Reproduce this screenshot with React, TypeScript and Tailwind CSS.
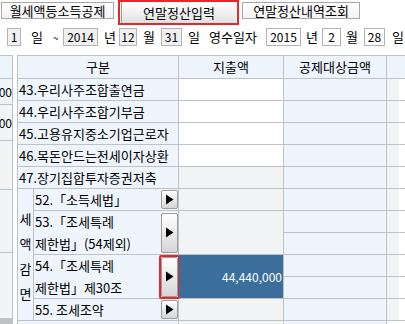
import React from "react"

const font = { fontFamily: '"Noto Sans CJK KR", "Noto Sans", sans-serif' }

function Tab({ label, active }: { label: string; active?: boolean }) {
  if (active) {
    return (
      <div className="ml-[4px] h-[25px] w-[121px] border-2 border-[#e5262a] p-px pt-0">
        <div className="flex h-[21px] items-center justify-center border-l border-[#9a9a9a] bg-gradient-to-b from-white to-[#e2e2e2] text-[13px] text-black">
          {label}
        </div>
      </div>
    )
  }
  return (
    <div className="mt-[2px] flex h-[17px] items-center justify-center border border-[#a8a8a8] bg-gradient-to-b from-white to-[#f3f3f3] text-[13px] text-black">
      {label}
    </div>
  )
}

function Box({ v, w, ml, gray }: { v: string; w: string; ml: string; gray?: boolean }) {
  return (
    <div
      className={`${ml} ${w} flex h-[18px] items-center justify-center border border-[#b4b4b4] text-[12px] ${gray ? "bg-[#f0f0f0]" : "bg-white"}`}
    >
      {v}
    </div>
  )
}

function Arrow({ tall, selected }: { tall?: boolean; selected?: boolean }) {
  const btn = (
    <div
      className={`flex w-[17px] items-center justify-center rounded-[2px] border border-[#9c9c9c] bg-gradient-to-b from-white to-[#d6d6d6] ${tall ? "h-[40px]" : "h-[19px]"}`}
    >
      <svg width="9" height="11" viewBox="0 0 9 11">
        <polygon points="1,0.5 8.5,5.5 1,10.5" fill="#000" />
      </svg>
    </div>
  )
  if (selected) {
    return <div className="-mr-[2px] rounded-[2px] border-2 border-[#e5262a] p-0">{btn}</div>
  }
  return btn
}

const cell = "flex items-center text-[13px] text-black"

export default function App() {
  return (
    <div className="h-[324px] w-[405px] overflow-hidden bg-white" style={font}>
      {/* tabs */}
      <div className="flex h-[26px] items-start">
        <div className="ml-[1px] w-[113px]">
          <Tab label="월세액등소득공제" />
        </div>
        <Tab label="연말정산입력" active />
        <div className="ml-[3px] w-[118px]">
          <Tab label="연말정산내역조회" />
        </div>
      </div>

      {/* date row */}
      <div className="mt-[2px] flex h-[18px] items-center text-[13px] text-black">
        <Box v="1" w="w-[14px]" ml="ml-[7px]" gray />
        <span className="ml-[10px] w-[13px]">일</span>
        <span className="ml-[9px] w-[8px] text-[10px]">~</span>
        <Box v="2014" w="w-[35px]" ml="ml-[2px]" gray />
        <span className="ml-[6px] w-[13px]">년</span>
        <Box v="12" w="w-[18px]" ml="ml-[2px]" gray />
        <span className="ml-[6px] w-[13px]">월</span>
        <Box v="31" w="w-[21px]" ml="ml-[5px]" gray />
        <span className="ml-[6px] w-[13px]">일</span>
        <span className="ml-[8px] w-[52px]">영수일자</span>
        <Box v="2015" w="w-[35px]" ml="ml-[5px]" />
        <span className="ml-[5px] w-[13px]">년</span>
        <Box v="2" w="w-[19px]" ml="ml-[3px]" />
        <span className="ml-[5px] w-[13px]">월</span>
        <Box v="28" w="w-[21px]" ml="ml-[5px]" />
        <span className="ml-[7px] w-[13px]">일</span>
      </div>

      {/* table area */}
      <div className="mt-[9px] flex">
        {/* cut-off column on the left */}
        <div className="flex w-[13px] flex-col gap-px border-t border-r border-[#c0c1c5] bg-[#c0c1c5]">
          <div className="h-[22px] bg-[#eef4fb]" />
          <div className="flex h-[25px] items-center justify-end bg-[#f3f4f6] text-[12px]">00</div>
          <div className="flex h-[35px] items-center justify-end bg-[#f3f4f6] text-[12px]">00</div>
          <div className="h-[48px] bg-[#f3f4f6]" />
          <div className="h-[62px] bg-[#f3f4f6]" />
          <div className="h-[65px] bg-[#f3f4f6]" />
        </div>
        <div className="w-[4px]" />

        <div className="grid h-[269px] flex-1 grid-cols-[15px_144px_104px_102px_1fr] grid-rows-[22px_repeat(12,21px)] gap-px bg-[#c0c1c5] p-px pr-0">
          {/* header */}
          <div className={`${cell} col-span-2 justify-center bg-[#eef4fb]`}>구분</div>
          <div className={`${cell} justify-center bg-[#eef4fb]`}>지출액</div>
          <div className={`${cell} justify-center bg-[#eef4fb]`}>공제대상금액</div>
          <div className="bg-[#eef4fb]" />

          {[
            ["43.우리사주조합출연금", "bg-white"],
            ["44.우리사주조합기부금", "bg-white"],
            ["45.고용유지중소기업근로자", "bg-white"],
            ["46.목돈안드는전세이자상환", "bg-white"],
            ["47.장기집합투자증권저축", "bg-[#f2f3f5]"],
          ].map(([t, bg]) => (
            <React.Fragment key={t}>
              <div className={`${cell} col-span-2 bg-[#eef5fc] pl-px`}>{t}</div>
              <div className={bg} />
              <div className="bg-[#eef5fc]" />
              <div className="bg-white">
                <div className="h-full w-[12px] bg-[#f2f3f5]" />
              </div>
            </React.Fragment>
          ))}

          {/* 세액감면 group */}
          <div className="col-start-1 row-start-7 row-span-6 flex flex-col items-center justify-center gap-[7px] bg-[#eef5fc] pt-[4px] text-[13px] leading-[18px]">
            <span>세</span>
            <span>액</span>
            <span>감</span>
            <span>면</span>
          </div>

          <div className={`${cell} col-start-2 row-start-7 justify-between bg-[#eef5fc] pl-[1px] pr-0`}>
            <span>52.「소득세법」</span>
            <Arrow />
          </div>
          <div className="col-start-3 row-start-7 bg-[#f2f3f5]" />

          <div className={`${cell} col-start-2 row-start-8 row-span-2 justify-between bg-[#eef5fc] pl-[1px]`}>
            <span className="leading-[22px]">
              53.「조세특례
              <br />
              제한법」(54제외)
            </span>
            <Arrow tall />
          </div>
          <div className="col-start-3 row-start-8 row-span-2 bg-[#f2f3f5]" />

          <div className={`${cell} col-start-2 row-start-10 row-span-2 justify-between bg-[#eef5fc] pl-[1px]`}>
            <span className="leading-[22px]">
              54.「조세특례
              <br />
              제한법」제30조
            </span>
            <Arrow tall selected />
          </div>
          <div className="col-start-3 row-start-10 row-span-2 flex items-center justify-end bg-[#3c6e9c] pr-[1px] text-[12px] text-white">
            44,440,000
          </div>

          <div className={`${cell} col-start-2 row-start-12 justify-between bg-[#eef5fc] pl-[1px]`}>
            <span>55. 조세조약</span>
            <Arrow />
          </div>
          <div className="col-start-3 row-start-12 bg-[#f2f3f5]" />

          {[7, 8, 9, 10, 11, 12].map((r) => (
            <React.Fragment key={r}>
              <div className="col-start-4 bg-[#eef5fc]" style={{ gridRowStart: r }} />
              <div className="col-start-5 bg-white" style={{ gridRowStart: r }}>
                <div className="h-full w-[12px] bg-[#f2f3f5]" />
              </div>
            </React.Fragment>
          ))}

          <div className="col-span-2 row-start-13 bg-[#eef5fc]" />
          <div className="col-start-3 row-start-13 bg-[#f2f3f5]" />
          <div className="col-start-4 row-start-13 bg-[#eef5fc]" />
          <div className="col-start-5 row-start-13 bg-white" />
        </div>
      </div>
    </div>
  )
}
